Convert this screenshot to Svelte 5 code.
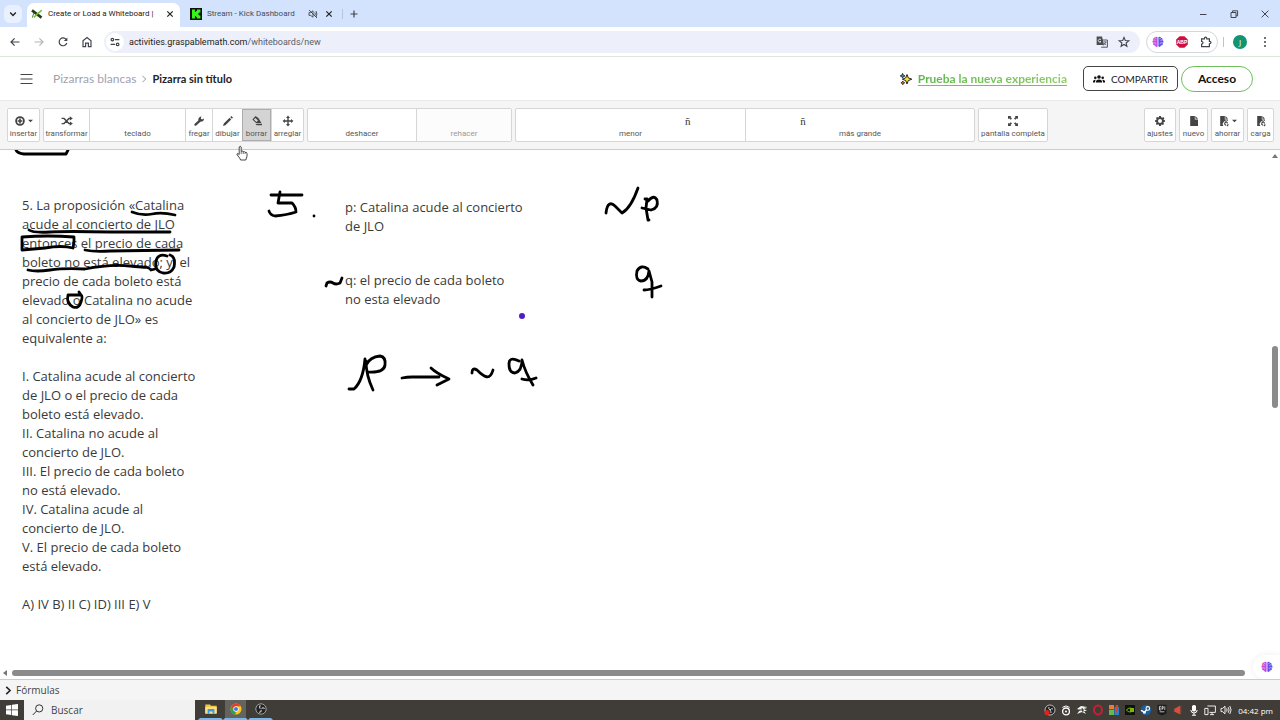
<script>
  const problem = [
    '5. La proposición «Catalina', 'acude al concierto de JLO', 'entonces el precio de cada', 'boleto no está elevado; y, el',
    'precio de cada boleto está', 'elevado o Catalina no acude', 'al concierto de JLO» es', 'equivalente a:', '',
    'I. Catalina acude al concierto', 'de JLO o el precio de cada', 'boleto está elevado.', 'II. Catalina no acude al', 'concierto de JLO.',
    'III. El precio de cada boleto', 'no está elevado.', 'IV. Catalina acude al', 'concierto de JLO.', 'V. El precio de cada boleto', 'está elevado.', '',
    'A) IV B) II C) ID) III E) V'
  ];
  const notes = [
    { x: 345, y: 48, lines: ['p: Catalina acude al concierto', 'de JLO'] },
    { x: 345, y: 121, lines: ['q: el precio de cada boleto', 'no esta elevado'] }
  ];
  const strokes = [
    'M16 0 Q17 3 24 4 L66 4 L68 0',
    'M132 62 Q142 66 152 64 T175 65',
    'M29 80 Q33 83 50 82 T110 82 L170 82',
    'M74 92 L73 98 Q62 95 45 98 L22 100 L22 87 Q48 85 74 87 L74 92',
    'M85 100 Q94 102 110 101 L179 100',
    'M28 120 Q36 122 50 120 T85 119 Q110 114 130 116 T145 117 Q150 118 151 120 L155 119',
    'M167 106 Q158 103 156 111 Q154 121 163 123 Q171 124 174 117 Q176 107 170 105',
    'M79 142 L81 145 L68 145 Q66 153 73 157 Q79 159 81 152 Q83 146 81 145',
    'M271 45 L302 45 M280 42 L278 53 L292 53 Q296 57 296 62 Q287 65 275 66 Q270 65 269 61',
    'M314 66 L314 66',
    'M326 136 L327 133 Q330 131 333 133 T340 133 L342 128',
    'M606 63 C607 53 611 52 615 56 L622 63 Q631 58 638 38',
    'M645 49 L647 49 L646 58 L648 70 M642 58 L651 60 M648 51 Q654 44 657 50 Q659 58 651 60 M648 69 L649 70',
    'M648 119 Q641 114 637 121 Q635 130 641 131 Q648 131 649 121 L652 132 L652 147 M644 140 Q650 140 661 136',
    'M349 239 L354 239 Q363 231 365 209 M366 211 Q366 225 373 240 M366 215 Q370 207 380 206 Q386 207 385 215 Q384 223 368 222',
    'M402 228 Q407 227 412 227 L439 227 M431 218 Q436 223 449 229 L437 235',
    'M472 223 Q472 217 477 220 C484 227 490 231 493 220',
    'M519 211 Q509 206 509 214 Q509 223 515 223 Q522 221 522 210 Q525 222 533 235 M522 229 Q529 231 536 228'
  ];
  const groups = [
    [{ label: 'insertar', icon: 'plus', w: 31, caret: true }],
    [
      { label: 'transformar', icon: 'shuffle', w: 45 }, { label: 'teclado', w: 96 }, { label: 'fregar', icon: 'wrench', w: 27 },
      { label: 'dibujar', icon: 'pencil', w: 30 }, { label: 'borrar', icon: 'eraser', w: 29, active: true }, { label: 'arreglar', icon: 'move', w: 32 }
    ],
    [{ label: 'deshacer', w: 108 }, { label: 'rehacer', w: 95, off: true }],
    [{ label: 'menor', w: 230, glyph: 'right' }, { label: 'más grande', w: 230, glyph: 'left' }],
    [{ label: 'pantalla completa', icon: 'full', w: 68 }]
  ];
  const endTools = [
    { label: 'ajustes', icon: 'gear', w: 30 }, { label: 'nuevo', icon: 'file', w: 27 },
    { label: 'ahorrar', icon: 'save', w: 31, caret: true }, { label: 'carga', icon: 'save', w: 25 }
  ];
  const tray = ['rec', 'webcam', 'game', 'opera', 'blocks', 'nvidia', 'steam', 'epic', 'horn', 'mic', 'net', 'vol'];
</script>

{#snippet brain()}
  <svg class="i12" viewBox="0 0 12 12" aria-hidden="true">
    <path d="M5.6 1.2 Q3.8.2 3 1.8 Q1 2 1.4 4 Q-.2 5.2 1 7 Q.8 9.2 2.8 9.6 Q4 11.8 5.6 10.6z" fill="#c04be6" />
    <path d="M6.4 1.2 Q8.2.2 9 1.8 Q11 2 10.6 4 Q12.2 5.2 11 7 Q11.2 9.2 9.2 9.6 Q8 11.8 6.4 10.6z" fill="#5a52e8" />
    <path d="M1.4 4 Q3 3.4 3.4 4.8 M1 7 Q3 6.4 4.2 7.4 M10.6 4 Q9 3.4 8.6 4.8 M11 7 Q9 6.4 7.8 7.4 M3.6 2 L4 3.2 M8.2 2 L8 3.2 M3 9.4 L3.4 8.8 M9 9.4 L8.6 8.8" fill="none" stroke="#f3d6ff" stroke-width=".7" />
    <path d="M3 1.8 Q1 2 1.4 4" fill="none" stroke="#ff6b8a" />
  </svg>
{/snippet}

{#snippet chromeIcon(name)}
  <svg class="i12" viewBox="0 0 12 12" aria-hidden="true" fill="none" stroke="#41454b" stroke-width="1.2">
    {#if name === 'back'}<path d="M10.5 6H2M5.6 2.4L2 6L5.6 9.6" />
    {:else if name === 'fwd'}<path d="M1.5 6H10M6.4 2.4L10 6L6.4 9.6" stroke="#b3b6bb" />
    {:else if name === 'reload'}<path d="M9.4 3.8A3.9 3.9 0 1 0 9.8 7" /><path d="M10.4 1.4V5H6.8z" fill="#41454b" stroke="none" />
    {:else if name === 'home'}<path d="M2 4.8L6 1.6L10 4.8V10.6H7.4V7.2H4.6V10.6H2z" />
    {:else if name === 'tune'}<path d="M6 3.6H10.4M1.6 8.4H6" /><circle cx="3.4" cy="3.6" r="1.3" /><circle cx="8.6" cy="8.4" r="1.3" />
    {:else if name === 'down'}<path d="M3.2 4.6L6 7.4L8.8 4.6" stroke="#202124" stroke-width="1.4" />
    {:else if name === 'close'}<path d="M3.3 3.3L8.7 8.7M8.7 3.3L3.3 8.7" stroke="#222" />
    {:else if name === 'add'}<path d="M6 2.5V9.5M2.5 6H9.5" />
    {:else if name === 'mute'}<path d="M2 4.6H3.6L6 2.8V9.2L3.6 7.4H2zM7.8 4.4Q8.8 6 7.8 7.6M9 3Q10.8 6 9 9M2 2L10 10" stroke-width=".9" />
    {:else if name === 'min'}<path d="M3 6.5H9.5" stroke-width="1" />
    {:else if name === 'max'}<path d="M3 4.5H8V9.5H3zM4.6 4.5V2.8H9.6V7.8H8" stroke-width="1" />
    {:else if name === 'x'}<path d="M2.6 2.6L9.4 9.4M9.4 2.6L2.6 9.4" stroke-width="1" />
    {:else if name === 'translate'}<path d="M6 4H11.4V11.2H5.2" stroke-width=".9" /><path d="M.6.6H6L8 9H.6z" fill="#4a4d52" stroke="none" /><path d="M5 3.6A1.5 1.5 0 1 0 5 5.6H3.8" stroke="#fff" stroke-width=".8" /><path d="M7.4 6H10.6M9 5.2V6M10 6L7.6 9.4M8.2 7L10 9" stroke-width=".7" />
    {:else if name === 'star'}<path d="M6 1.4L7.3 4.5L10.7 4.8L8.1 7L8.9 10.3L6 8.5L3.1 10.3L3.9 7L1.3 4.8L4.7 4.5z" stroke-width="1.1" />
    {:else if name === 'ext'}<path d="M1.6 2.8H4.4Q4.4 1.2 5.6 1.2T6.8 2.8H9.4V5.4Q11 5.4 11 6.6T9.4 7.8V10.6H1.6V8.2Q3 8 3 6.8T1.6 5.4z" />
    {:else if name === 'dots'}<g fill="#41454b" stroke="none"><circle cx="6" cy="2" r="1" /><circle cx="6" cy="6" r="1" /><circle cx="6" cy="10" r="1" /></g>
    {:else if name === 'abp'}<path d="M3.6.2H8.4L11.8 3.6V8.4L8.4 11.8H3.6L.2 8.4V3.6z" fill="#d20f3c" stroke="none" /><text x="6" y="7.8" text-anchor="middle" class="abp">ABP</text>
    {:else if name === 'gm'}<path d="M1 2.4L10.5 9.6" stroke="#273a1d" stroke-width="2.6" /><path d="M10.8 2.4L6 6L3 9.6" stroke="#6cc52e" stroke-width="1.6" /><path d="M3 5Q2 7 1.4 9.6" stroke="#49752e" stroke-width="1" />
    {:else if name === 'kick'}<path d="M0 0H12V12H0z" fill="#111" stroke="none" /><path d="M2 1.5H5V4H6V3H7V1.5H10.4V4.6H9.2V5.4H8V6.6H9.2V7.4H10.4V10.5H7V9H6V8H5V10.5H2z" fill="#35f218" stroke="none" />
    {/if}
  </svg>
{/snippet}

{#snippet toolIcon(name)}
  <svg class="i12" viewBox="0 0 12 12" aria-hidden="true" fill="#444">
    {#if name === 'plus'}<path fill-rule="evenodd" d="M6 1.2A4.8 4.8 0 1 1 6 10.8A4.8 4.8 0 0 1 6 1.2zM6 3A3 3 0 1 0 6 9A3 3 0 0 0 6 3z" /><path d="M5.2 3.6H6.8V5.2H8.4V6.8H6.8V8.4H5.2V6.8H3.6V5.2H5.2z" />
    {:else if name === 'shuffle'}<path d="M.6 3.4H3L8 8.6H9.4M.6 8.6H3L8 3.4H9.4" fill="none" stroke="#444" stroke-width="1.4" /><path d="M8.8 1.2L11.8 3.4L8.8 5.6zM8.8 6.4L11.8 8.6L8.8 10.8z" />
    {:else if name === 'wrench'}<path d="M1.3 9.2L5.3 5.4Q5 2.2 8.4 1.2L7.8 3.4L9 4.4L11 3.4Q11 6.6 7.4 6.8L3 10.8Q1 11 1.3 9.2z" />
    {:else if name === 'pencil'}<path d="M1 11L1.8 8.6L7.6 2.8L9.2 4.4L3.4 10.2zM8.2 2.1L9.3 1L11 2.7L9.9 3.8z" />
    {:else if name === 'eraser'}<path fill-rule="evenodd" d="M4.6 1L7.6 3.2L10.4 8H5L1.4 4.6zM2.8 4.5L5.4 7L7 5.6L4.4 3z" /><path d="M4.6 8.8H11V10.2H5.6z" />
    {:else if name === 'move'}<path d="M6 .6L8 3H6.7V5.3H9V4L11.4 6L9 8V6.7H6.7V9H8L6 11.4L4 9H5.3V6.7H3V8L.6 6L3 4V5.3H5.3V3H4z" />
    {:else if name === 'full'}<path d="M1 1H4.4L3.4 2L5 3.6L3.8 4.8L2 3.2L1 4.2zM11 1V4.2L10 3.2L8.2 4.8L7 3.6L8.6 2L7.6 1zM1 11V7.8L2 8.8L3.8 7.2L5 8.4L3.4 10L4.4 11zM11 11H7.6L8.6 10L7 8.4L8.2 7.2L10 8.8L11 7.8z" />
    {:else if name === 'gear'}<path fill-rule="evenodd" d="M5.1 1H6.9L7.2 2.3L8.2 2.7L9.3 2L10.4 3.2L9.6 4.2L9.9 5.1L11 5.3V6.8L9.8 7L9.4 7.9L10.1 9L8.9 10.1L7.8 9.4L7.1 9.7L6.9 11H5.1L4.8 9.7L4 9.3L2.9 10L1.8 8.9L2.5 7.8L2.2 7L1 6.8V5.2L2.2 5L2.6 4.1L1.9 3L3.1 1.9L4.1 2.6L4.8 2.3zM6 4A2 2 0 1 0 6 8A2 2 0 0 0 6 4z" />
    {:else if name === 'file'}<path d="M2.2 1H6.8V4.4H10V11H2.2zM7.4 1L10 3.8H7.4z" />
    {:else if name === 'save'}<path d="M2.2 1H6.8V4.4H10V6L8.2 5.2L6 6.4L4.4 9L5.4 11H2.2zM7.4 1L10 3.8H7.4z" /><path d="M6.4 8.6L8 6.6L9.8 8.4M8 10.4L6.4 8.8M10.4 9.4L9 11" fill="none" stroke="#444" stroke-width="1.2" />
    {/if}
  </svg>
{/snippet}

{#snippet tool(t)}
  <button class="tool" class:active={t.active} class:grow={t.w > 200} disabled={t.off} style:flex-basis="{t.w}px">
    <span class="pic">
      {#if t.icon}{@render toolIcon(t.icon)}{/if}
      {#if t.caret}<svg class="caret" viewBox="0 0 4 3" aria-hidden="true"><path d="M0 .5H4L2 2.5z" fill="#444" /></svg>{/if}
      {#if t.glyph}<span class="glyph {t.glyph}">ñ</span>{/if}
    </span>
    <span>{t.label}</span>
  </button>
{/snippet}

<div class="screen">
  <div class="tabs">
    <button class="search-tabs" aria-label="Buscar pestañas">{@render chromeIcon('down')}</button>
    <div class="tab current">
      {@render chromeIcon('gm')}<span class="name">Create or Load a Whiteboard |</span>
      <button aria-label="Cerrar pestaña">{@render chromeIcon('close')}</button>
    </div>
    <div class="tab">
      {@render chromeIcon('kick')}<span class="name">Stream - Kick Dashboard</span>
      <button aria-label="Silenciar">{@render chromeIcon('mute')}</button>
      <button aria-label="Cerrar pestaña">{@render chromeIcon('close')}</button>
    </div>
    <i class="sep"></i>
    <button aria-label="Nueva pestaña">{@render chromeIcon('add')}</button>
    <div class="window">
      <button aria-label="Minimizar">{@render chromeIcon('min')}</button>
      <button aria-label="Restaurar">{@render chromeIcon('max')}</button>
      <button aria-label="Cerrar">{@render chromeIcon('x')}</button>
    </div>
  </div>

  <div class="nav">
    <button aria-label="Atrás">{@render chromeIcon('back')}</button>
    <button aria-label="Adelante">{@render chromeIcon('fwd')}</button>
    <button aria-label="Recargar">{@render chromeIcon('reload')}</button>
    <button aria-label="Inicio">{@render chromeIcon('home')}</button>
    <div class="address">
      <button class="site" aria-label="Información del sitio">{@render chromeIcon('tune')}</button>
      <span class="url">activities.graspablemath.com<span>/whiteboards/new</span></span>
      <button aria-label="Traducir">{@render chromeIcon('translate')}</button>
      <button aria-label="Favoritos">{@render chromeIcon('star')}</button>
    </div>
    <div class="exts">
      <button aria-label="Asistente">{@render brain()}</button>
      <button aria-label="Bloqueador">{@render chromeIcon('abp')}</button>
      <button aria-label="Extensiones">{@render chromeIcon('ext')}</button>
    </div>
    <i class="sep"></i>
    <button class="avatar">J</button>
    <button aria-label="Menú del navegador">{@render chromeIcon('dots')}</button>
  </div>

  <header>
    <button aria-label="Menú"><svg class="burger" viewBox="0 0 12 12" aria-hidden="true"><path d="M0 1.5H12M0 6H12M0 10.5H12" stroke="#444" stroke-width="1.2" /></svg></button>
    <nav>
      <a class="crumb" href="#pizarras">Pizarras blancas</a>
      <svg class="chev" viewBox="0 0 6 8" aria-hidden="true"><path d="M1.5.8L4.7 4L1.5 7.2" fill="none" stroke="#98979f" /></svg>
      <strong>Pizarra sin título</strong>
    </nav>
    <svg class="i12 spark" viewBox="0 0 12 12" aria-hidden="true">
      <path d="M7 1.5L8.3 4.9L11.8 6.2L8.3 7.6L7 11L5.7 7.6L2.4 6.2L5.7 4.9z" fill="#f7e32a" stroke="#222" stroke-width="1" />
      <path d="M2.6.4L3.3 2.2L5 2.9L3.3 3.6L2.6 5.2L1.9 3.6L.2 2.9L1.9 2.2z" fill="#36a3b8" stroke="#222" stroke-width=".9" />
      <path d="M2.8 8L3.4 9.2L4.8 9.8L3.4 10.4L2.8 11.8L2.2 10.4L.9 9.8L2.2 9.2z" fill="#e0633e" stroke="#222" stroke-width=".8" />
    </svg>
    <a class="try" href="#nueva">Prueba la nueva experiencia</a>
    <button class="share">
      <svg class="i12" viewBox="0 0 12 12" aria-hidden="true" fill="#111"><circle cx="6" cy="4" r="1.8" /><circle cx="2.3" cy="4.8" r="1.3" /><circle cx="9.7" cy="4.8" r="1.3" /><path d="M2.9 9.6V8.4Q3.2 6.5 6 6.5T9.1 8.4V9.6zM0 9.6V8.2Q.4 6.7 2.9 6.8Q2 7.4 2 9.6zM12 9.6V8.2Q11.6 6.7 9.1 6.8Q10 7.4 10 9.6z" /></svg>
      COMPARTIR
    </button>
    <button class="login">Acceso</button>
  </header>

  <div class="toolbar">
    {#each groups as g}<div class="group" class:wide={g[0].w > 200}>{#each g as t}{@render tool(t)}{/each}</div>{/each}
    <div class="end">{#each endTools as t}<div class="group">{@render tool(t)}</div>{/each}</div>
    <svg class="hand" viewBox="0 0 12 16" aria-hidden="true"><path d="M3.2 9.5V2Q4.2.4 5.2 2V6.4L6 6Q7 5.8 7.2 6.8Q8.6 6 9 7.4Q10.8 6.8 11 8.4V11.4L9.8 15H4.6Q4 13 2 11L.8 9Q1.4 7.8 3.2 9.5z" fill="#fff" stroke="#333" stroke-width=".9" /><path d="M5.2 6.4V9M7.2 7V9M9 7.6V9" stroke="#333" stroke-width=".7" /></svg>
  </div>

  <main>
    <div class="text problem">{#each problem as line}<div>{line}</div>{/each}</div>
    {#each notes as n}
      <div class="text" style:left="{n.x}px" style:top="{n.y}px">{#each n.lines as line}<div>{line}</div>{/each}</div>
    {/each}
    <svg class="ink" viewBox="0 0 700 500" aria-hidden="true">
      {#each strokes as d}<path {d} />{/each}
      <circle cx="522" cy="166" r="3" />
    </svg>
    <div class="vbar"><svg viewBox="0 0 6 4" aria-hidden="true"><path d="M0 4H6L3 0z" fill="#777" /></svg><i></i></div>
    <div class="hbar"><svg viewBox="0 0 4 6" aria-hidden="true"><path d="M4 0V6L0 3z" fill="#777" /></svg><i></i></div>
    <button class="helper" aria-label="Asistente">{@render brain()}</button>
  </main>

  <button class="formulas">
    <svg viewBox="0 0 6 8" aria-hidden="true"><path d="M1 .8L4.4 4L1 7.2" fill="none" stroke="#222" stroke-width="1.4" /></svg>Fórmulas
  </button>

  <div class="taskbar">
    <button class="start" aria-label="Inicio"><svg class="i12" viewBox="0 0 12 12" aria-hidden="true"><path d="M0 1.7L5.3.9V5.6H0zM6 .8L12 0V5.6H6zM0 6.3H5.3V11.1L0 10.3zM6 6.3H12V12L6 11.2z" fill="#fff" /></svg></button>
    <label class="search">
      <svg class="i12" viewBox="0 0 12 12" aria-hidden="true"><circle cx="7.2" cy="4.4" r="3.6" fill="none" stroke="#333" /><path d="M4.6 7L.8 11" stroke="#333" /></svg>
      <input type="text" placeholder="Buscar" aria-label="Buscar" />
    </label>
    <button class="app open" aria-label="Explorador"><svg class="i12" viewBox="0 0 12 12" aria-hidden="true"><path d="M.3 1.5H5L6 2.8H11.7V10.6H.3z" fill="#f4c542" /><path d="M.3 4H11.7V10.6H.3z" fill="#ffe08a" /><path d="M2.6 6H9.4V10.8H7.6V8.4H4.4V10.8H2.6z" fill="#3c9bdc" /></svg></button>
    <button class="app open front" aria-label="Chrome"><svg class="i12" viewBox="0 0 12 12" aria-hidden="true"><circle cx="6" cy="6" r="5.5" fill="#f9c816" /><path d="M1.2 3.3A5.5 5.5 0 0 1 10.8 3.3H6L3.6 7.4z" fill="#e33b2e" /><path d="M1.2 3.3L3.7 7.4L6 8.6L5.4 11.5A5.5 5.5 0 0 1 1.2 3.3z" fill="#30a04c" /><circle cx="6" cy="6" r="2.7" fill="#fff" /><circle cx="6" cy="6" r="2.1" fill="#3a7de8" /></svg></button>
    <button class="app open" aria-label="OBS"><svg class="i12" viewBox="0 0 12 12" aria-hidden="true"><circle cx="6" cy="6" r="5.2" fill="#222" stroke="#bbb" stroke-width=".8" /><path d="M5.6 2.4Q3.4 3.6 5.4 5.6M9.4 6Q8.6 3.8 6.6 5.6M4 9.2Q6.6 9.4 6 6.8" fill="none" stroke="#ccc" stroke-width="1.1" /></svg></button>
    <div class="tray">
      {#each tray as t}
        <svg class="i12" viewBox="0 0 12 12" aria-hidden="true" fill="none" stroke="#fff">
          {#if t === 'rec'}<circle cx="6" cy="6" r="5" fill="#222" stroke="#ddd" stroke-width=".8" /><path d="M5 3Q4 5 6 6M9 5Q7 4 6 6M7 9Q7 7 6 6" stroke="#ccc" /><circle cx="3" cy="8.6" r="2.6" fill="#e22222" stroke="none" />
          {:else if t === 'webcam'}<circle cx="6" cy="7.4" r="3.4" stroke-width="1.3" /><circle cx="6" cy="7.4" r="1" fill="#fff" stroke="none" /><path d="M2.4 3.4Q6 .4 9.6 3.4" />
          {:else if t === 'game'}<path d="M1 5L5 2L11 3L8 5L11 7L8 7L10 10L6 8L1 10L4 6z" fill="#f4f4f4" stroke="none" /><path d="M3 6H8M6 4L7 8" stroke="#333" /><circle cx="9.5" cy="4" r="1" fill="#8ac34a" stroke="none" />
          {:else if t === 'opera'}<ellipse cx="6" cy="6" rx="4" ry="4.4" stroke="#c91f34" stroke-width="2" />
          {:else if t === 'blocks'}<g stroke="none"><path d="M1 1H6V5H1z" fill="#ed7b35" /><path d="M1 5.6H6V11H1z" fill="#64b84d" /><path d="M6.4 3H11V11H6.4z" fill="#2d83ca" /><path d="M7.6 1H10V7L8.8 9L7.6 7z" fill="#d84234" /></g>
          {:else if t === 'nvidia'}<path d="M1 1H11V11H1z" fill="#111" stroke="none" /><path d="M2.4 6Q6 2 9.8 6Q6 10 2.4 6z" stroke="#76b900" /><path d="M6 4H10V8H6z" fill="#76b900" stroke="none" />
          {:else if t === 'steam'}<circle cx="6" cy="6" r="5.2" fill="#1d5d96" stroke="none" /><circle cx="7.8" cy="4.4" r="1.8" stroke-width="1.1" /><path d="M1 6.4L4.6 8.2L6.6 5.8" stroke-width="1.4" /><circle cx="4.4" cy="8.4" r="1.4" fill="#fff" stroke="none" />
          {:else if t === 'epic'}<path d="M1.6.8H10.4V9.6L6 11.4L1.6 9.6z" fill="#191919" stroke="none" /><path d="M5 2.4H3.4V6H5M3.4 4.2H4.8M6 6V2.4H7.2V4.4H6M8.8 2.4V6M3.6 7.8H8.4" stroke-width=".7" />
          {:else if t === 'horn'}<path d="M2 5L8.4 1.4V10.6L2 7.4z" fill="#d94f3d" stroke="none" /><path d="M2 5.4V7M9.6 2V10" stroke="#8c2c22" />
          {:else if t === 'mic'}<path d="M4 2Q6 0 8 2V6Q8 7.6 6 7.6T4 6z" fill="#fff" stroke="none" /><path d="M2.8 6Q3 9 6 9T9.2 6M6 9V11.4M4 11.2H8" />
          {:else if t === 'net'}<path d="M3.4 2H11.4V8.4H5.4M6 10.6H10M8 8.4V10.6M.8 4.4H4V10.6H.8z" stroke-width=".9" />
          {:else}<path d="M1 4.4H2.6L5 2.2V9.8L2.6 7.6H1zM6.6 4.4Q7.6 6 6.6 7.6M8.2 3.2Q10 6 8.2 8.8M9.8 2Q12.4 6 9.8 10" stroke-width=".9" />
          {/if}
        </svg>
      {/each}
    </div>
    <time>04:42 pm</time>
  </div>
</div>

<style>
  :global(body) { margin: 0; }
  .screen { display: flex; flex-direction: column; height: 100vh; background: #fff; overflow: hidden; font-family: "Open Sans", "Noto Sans", sans-serif; color: #333; }
  button { margin: 0; padding: 0; border: 0; background: none; font: inherit; color: inherit; display: flex; align-items: center; justify-content: center; box-sizing: border-box; }
  svg { display: block; flex: none; }
  .i12 { width: 12px; height: 12px; }
  .sep { width: 1px; height: 10px; background: #b5c4df; }

  .tabs { display: flex; align-items: center; height: 27px; flex: none; background: #d3e3fd; padding-left: 4px; }
  .search-tabs { width: 18px; height: 18px; border-radius: 6px; background: #e9f1fe; margin-right: 5px; }
  .tab { display: flex; align-items: center; height: 24px; margin-top: 3px; box-sizing: border-box; padding: 0 4px 3px; width: 153px; font-family: Roboto, sans-serif; font-size: 8px; color: #474c55; }
  .tab.current { background: #fff; border-radius: 7px 7px 0 0; color: #222; }
  .tab .name { flex: 1; margin-left: 5px; white-space: nowrap; overflow: hidden; }
  .tab:not(.current) { margin-left: 6px; padding-right: 4px; }
  .tab button + button { margin-left: 4px; }
  .tabs .sep { margin: 0 5px 0 3px; }
  .window { display: flex; gap: 19px; margin-left: auto; padding-right: 9px; }

  .nav { display: flex; align-items: center; height: 30px; flex: none; box-sizing: border-box; padding: 0 9px; border-bottom: 1px solid #dfe6dd; gap: 12px; }
  .address { flex: 1; display: flex; align-items: center; height: 22px; border-radius: 11px; background: #edf0fa; padding: 0 10px 0 2px; margin: 0 -6px 0 -1px; gap: 10px; }
  .site { width: 18px; height: 18px; border-radius: 9px; background: #fff; margin-right: -5px; }
  .url { flex: 1; font-family: Roboto, sans-serif; font-size: 9px; color: #222; }
  .url span { color: #5a5e66; }
  .exts { display: flex; align-items: center; gap: 12px; height: 22px; box-sizing: border-box; border: 1px solid #d4d7dc; border-radius: 11px; padding: 0 5px; margin-right: -7px; }
  .abp { font: bold 5px "Liberation Sans", sans-serif; fill: #fff; stroke: none; }
  .avatar { width: 14px; height: 14px; border-radius: 7px; background: #119472; color: #fff; font-size: 8px; margin-left: -3px; }

  header { display: flex; align-items: center; height: 43px; flex: none; padding: 0 27px 0 20px; font-family: Lato, sans-serif; font-size: 12px; }
  .burger { width: 13px; height: 12px; }
  nav { display: flex; align-items: center; gap: 5px; margin-left: 20px; margin-right: auto; }
  .crumb { color: #a29fb0; text-decoration: none; }
  .chev { width: 6px; height: 8px; }
  strong { font-weight: 700; font-size: 11px; color: #222; }
  .spark { margin-right: 6px; }
  .try { font-weight: 700; color: transparent; background: linear-gradient(90deg, #5cb548, #8fcc68); background-clip: text; text-decoration: underline #74c15a; text-underline-offset: 2px; margin-right: 16px; }
  .share { height: 25px; width: 95px; border: 1px solid #444; border-radius: 5px; font-size: 10px; color: #222; gap: 6px; margin-right: 3px; }
  .login { height: 26px; width: 72px; border: 1px solid #6fbf5c; border-radius: 13px; font-weight: 700; color: #111; }

  .toolbar { position: relative; display: flex; gap: 3px; height: 50px; flex: none; box-sizing: border-box; padding: 7px 6px 7px 7px; background: #f5f5f5; border-top: 1px solid #e8e8e8; border-bottom: 1px solid #ccc; }
  .group { display: flex; flex: none; height: 34px; box-sizing: border-box; border: 1px solid #d6d6d6; border-radius: 2px; background: #fff; }
  .group.wide { flex: 0 1 460px; }
  .tool { flex: none; flex-direction: column; justify-content: flex-start; padding-top: 4px; font-family: Roboto, sans-serif; font-size: 8px; line-height: 12px; color: #555; white-space: nowrap; }
  .tool.grow { flex: 1 1 0; }
  .tool + .tool { border-left: 1px solid #d6d6d6; }
  .tool:disabled { color: #999; background: #fcfcfc; }
  .tool.active { background: #d4d4d4; border: 1px solid #adadad; padding-top: 3px; }
  .pic { display: flex; align-items: center; justify-content: center; height: 15px; width: 100%; }
  .caret { width: 5px; height: 4px; margin-left: 2px; }
  .glyph { font: 11px/14px "Liberation Serif", serif; color: #333; }
  .glyph.right { margin-left: 50%; }
  .glyph.left { margin-right: 50%; }
  .end { display: flex; gap: 3px; margin-left: auto; }
  .hand { position: absolute; left: 236px; top: 44px; width: 12px; height: 16px; z-index: 2; }

  main { position: relative; flex: 1; overflow: hidden; }
  .text { position: absolute; font-size: 13px; line-height: 19px; color: #3a3a3a; white-space: nowrap; }
  .text div { min-height: 19px; }
  .problem { left: 22px; top: 46px; }
  .ink { position: absolute; left: 0; top: 0; width: 700px; height: 500px; }
  .ink path { fill: none; stroke: #000; stroke-width: 2.8; stroke-linecap: round; stroke-linejoin: round; }
  .ink circle { fill: #4b1fc4; }
  .vbar { position: absolute; right: 2px; top: 4px; bottom: 20px; width: 6px; }
  .vbar svg { width: 6px; height: 4px; }
  .vbar i { position: absolute; left: 0; top: 38%; width: 6px; height: 62px; border-radius: 3px; background: #8b8b8b; }
  .hbar { position: absolute; left: 3px; right: 35px; bottom: 3px; display: flex; align-items: center; gap: 5px; }
  .hbar svg { width: 4px; height: 6px; }
  .hbar i { flex: 1; height: 6px; border-radius: 3px; background: #8b8b8b; }
  .helper { position: absolute; right: 0; bottom: 0; width: 27px; height: 24px; border-radius: 12px 0 0 12px; background: #fff; box-shadow: 0 0 6px #eee; }

  .formulas { height: 21px; flex: none; justify-content: flex-start; gap: 4px; padding-left: 5px; background: #f5f5f5; border-top: 1px solid #ccc; font-size: 10px; color: #444; }
  .formulas svg { width: 7px; height: 9px; }

  .taskbar { display: flex; height: 20px; flex: none; background: #403d38; align-items: stretch; }
  .start { width: 24px; }
  .search { display: flex; align-items: center; gap: 7px; width: 171px; box-sizing: border-box; padding-left: 8px; background: #f1f1f1; margin-right: 3px; }
  .search input { flex: 1; min-width: 0; border: 0; padding: 0; background: none; font: 10px "Open Sans", sans-serif; color: #333; }
  .search input::placeholder { color: #444; opacity: 1; }
  .app { width: 25px; }
  .app.open { border-bottom: 2px solid #76b9ed; border-left: 2px solid transparent; border-right: 2px solid transparent; background-clip: padding-box; }
  .app.front { background-color: #65635f; }
  .tray { display: flex; align-items: center; gap: 4px; margin-left: auto; }
  time { display: flex; align-items: center; font: 8px "Open Sans", sans-serif; color: #fff; padding: 0 7px 0 6px; }
</style>
